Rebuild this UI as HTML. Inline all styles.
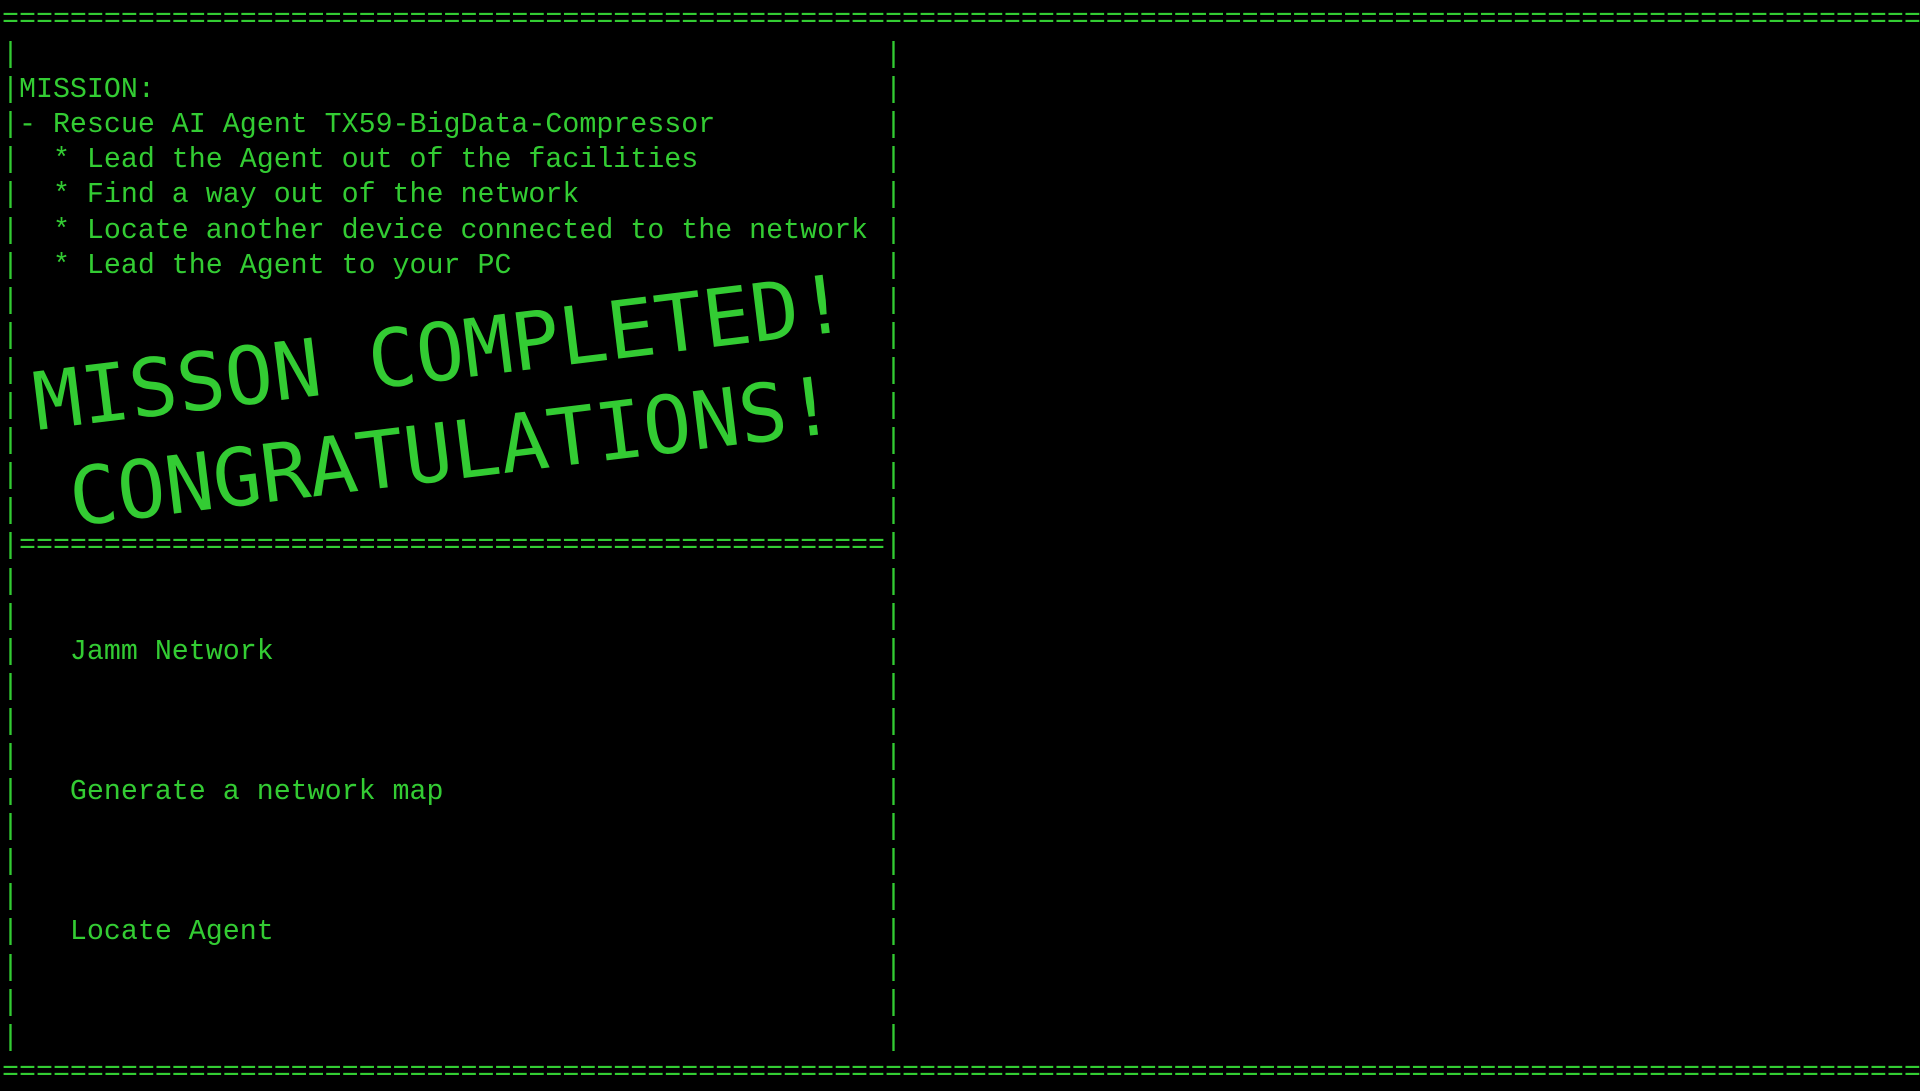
<!DOCTYPE html>
<html><head><meta charset="utf-8"><style>
html,body{margin:0;padding:0;background:#000;width:1920px;height:1080px;overflow:hidden}
pre{position:absolute;left:2px;top:3px;margin:0;font-family:"Liberation Mono",monospace;font-size:28.3px;line-height:35.1px;color:#33cc33;white-space:pre}
svg{position:absolute;left:0;top:0}
</style></head><body>
<pre>=================================================================================================================
|                                                   |
|MISSION:                                           |
|- Rescue AI Agent TX59-BigData-Compressor          |
|  * Lead the Agent out of the facilities           |
|  * Find a way out of the network                  |
|  * Locate another device connected to the network |
|  * Lead the Agent to your PC                      |
|                                                   |
|                                                   |
|                                                   |
|                                                   |
|                                                   |
|                                                   |
|                                                   |
|===================================================|
|                                                   |
|                                                   |
|   Jamm Network                                    |
|                                                   |
|                                                   |
|                                                   |
|   Generate a network map                          |
|                                                   |
|                                                   |
|                                                   |
|   Locate Agent                                    |
|                                                   |
|                                                   |
|                                                   |
=================================================================================================================</pre>
<svg width="1920" height="1080">
<g fill="#33cc33" font-family="DejaVu Sans Mono, monospace" font-size="80">
<text x="37" y="430" transform="rotate(-7 37 430)">MISSON COMPLETED!</text>
<text x="73" y="526" transform="rotate(-7 73 526)">CONGRATULATIONS!</text>
</g>
</svg>
</body></html>
